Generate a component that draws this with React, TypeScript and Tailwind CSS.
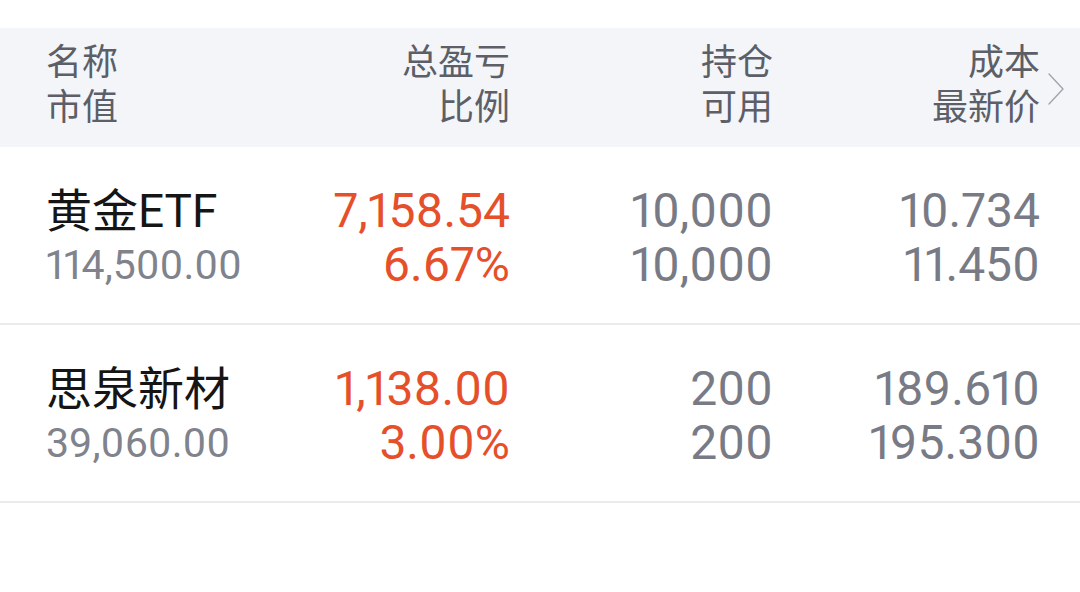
interface Holding {
  name: string;
  marketValue: string;
  pnl: string;
  pnlPct: string;
  position: string;
  available: string;
  cost: string;
  price: string;
}

const HOLDINGS: Holding[] = [
  {
    name: "黄金ETF",
    marketValue: "114,500.00",
    pnl: "7,158.54",
    pnlPct: "6.67%",
    position: "10,000",
    available: "10,000",
    cost: "10.734",
    price: "11.450",
  },
  {
    name: "思泉新材",
    marketValue: "39,060.00",
    pnl: "1,138.00",
    pnlPct: "3.00%",
    position: "200",
    available: "200",
    cost: "189.610",
    price: "195.300",
  },
];

const FONT = "font-['Roboto','Noto_Sans_CJK_SC',sans-serif] proportional-nums";
const GRID = "grid grid-cols-[202px_262px_263px_267px] pl-[46px] pr-[40px]";

export default function App() {
  return (
    <div className={`w-[1080px] h-[592px] bg-white overflow-hidden pt-[28px] ${FONT}`}>
      {/* Header */}
      <div className={`relative bg-[#f3f5f9] pt-[13px] pb-[16px] text-[36px] leading-[45px] text-[#5c5f67] ${GRID}`}>
        <div className="flex flex-col">
          <span>名称</span>
          <span>市值</span>
        </div>
        <div className="flex flex-col items-end">
          <span>总盈亏</span>
          <span>比例</span>
        </div>
        <div className="flex flex-col items-end">
          <span>持仓</span>
          <span>可用</span>
        </div>
        <div className="flex flex-col items-end">
          <span>成本</span>
          <span>最新价</span>
        </div>
        <svg
          className="absolute left-[1047px] top-[44px]"
          width="18"
          height="34"
          viewBox="0 0 18 34"
          fill="none"
          stroke="#a3a5ac"
          strokeWidth="1.4"
          strokeLinecap="round"
          strokeLinejoin="round"
        >
          <polyline points="2,2 16,17 2,32" />
        </svg>
      </div>

      {/* Rows */}
      {HOLDINGS.map((h) => (
        <div
          key={h.name}
          className={`pt-[37px] pb-[31px] border-b-2 border-[#ebebee] leading-[54px] ${GRID}`}
        >
          <div className="flex flex-col">
            <span className="text-[46px] text-[#151515]">{h.name}</span>
            <span className="text-[41px] text-[#80838c]">{h.marketValue}</span>
          </div>
          <div className="flex flex-col items-end text-[48px] text-[#e5502a]">
            <span>{h.pnl}</span>
            <span>{h.pnlPct}</span>
          </div>
          <div className="flex flex-col items-end text-[48px] text-[#787b85]">
            <span>{h.position}</span>
            <span>{h.available}</span>
          </div>
          <div className="flex flex-col items-end text-[48px] text-[#787b85]">
            <span>{h.cost}</span>
            <span>{h.price}</span>
          </div>
        </div>
      ))}
    </div>
  );
}
